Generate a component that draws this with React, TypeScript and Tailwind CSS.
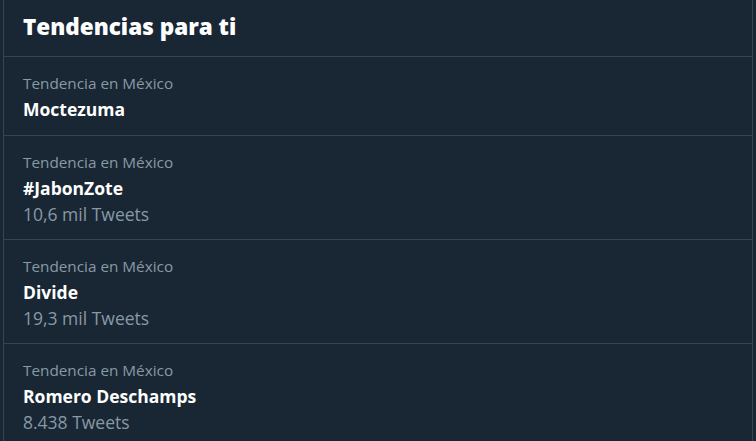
const trends = [
  { place: "Tendencia en México", name: "Moctezuma", count: "" },
  { place: "Tendencia en México", name: "#JabonZote", count: "10,6 mil Tweets" },
  { place: "Tendencia en México", name: "Divide", count: "19,3 mil Tweets" },
  { place: "Tendencia en México", name: "Romero Deschamps", count: "8.438 Tweets" },
];

export default function App() {
  return (
    <div
      className="w-[756px] h-[441px] overflow-hidden bg-[#192734] pl-[3px] pr-[3px]"
      style={{ fontFamily: '"Open Sans", "Noto Sans", Arial, sans-serif' }}
    >
      <section className="h-full border-x border-[#38444d] bg-[#192734]">
        <div className="h-[57px] border-b border-[#38444d] px-[19px] flex items-center">
          <h2 className="text-[22.5px] font-extrabold text-white leading-7 -mt-[2px]">
            Tendencias para ti
          </h2>
        </div>
        {trends.map((t) => (
          <div
            key={t.name}
            className={
              t.count
                ? "border-b border-[#38444d] px-[19px] pt-[14px] pb-[12px]"
                : "border-b border-[#38444d] px-[19px] pt-[14px] pb-[13px]"
            }
          >
            <div className="text-[15.3px] leading-[25px] text-[#8899a6]">{t.place}</div>
            <div className="text-[17.5px] leading-[26px] font-bold text-white">{t.name}</div>
            {t.count && (
              <div className="text-[17.5px] leading-[26px] text-[#8899a6]">{t.count}</div>
            )}
          </div>
        ))}
      </section>
    </div>
  );
}
